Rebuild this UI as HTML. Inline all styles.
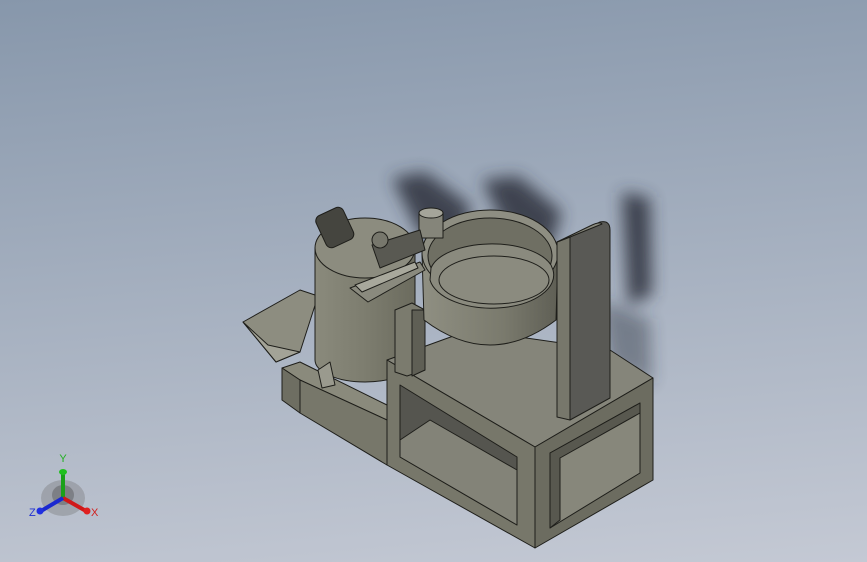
<!DOCTYPE html>
<html><head><meta charset="utf-8"><style>
html,body{margin:0;padding:0;width:867px;height:562px;overflow:hidden}
body{background:linear-gradient(175deg,#8797ab 0%,#a3aebe 45%,#c4c9d4 100%)}
svg{position:absolute;left:0;top:0}
</style></head><body>
<svg width="867" height="562" viewBox="0 0 867 562" xmlns="http://www.w3.org/2000/svg">
<defs>
<filter id="b" x="-50%" y="-50%" width="200%" height="200%"><feGaussianBlur stdDeviation="8"/></filter>
<linearGradient id="cyl" x1="0" x2="1"><stop offset="0" stop-color="#8a8a7c"/><stop offset=".5" stop-color="#7d7d6f"/><stop offset="1" stop-color="#6b6b5e"/></linearGradient>
<linearGradient id="bowl" x1="0" x2="1"><stop offset="0" stop-color="#8f8f82"/><stop offset=".6" stop-color="#7a7a6d"/><stop offset="1" stop-color="#5f5f55"/></linearGradient>
</defs>
<g fill="#2e333c" opacity=".85" filter="url(#b)">
<path d="M392 178 L425 172 L470 205 L465 250 L420 235 Z"/>
<path d="M482 180 L518 176 L562 212 L550 250 L505 228 Z"/>
<path d="M622 192 L650 198 L652 295 L628 305 Z"/>
<path d="M600 300 L650 320 L652 385 L610 365 Z" opacity=".5"/>
</g>
<g stroke="#1e1e1a" stroke-width="1" stroke-linejoin="round">
<polygon points="243,322 300,290 318,296 300,352 276,362" fill="#8d8d80"/>
<polygon points="243,322 276,362 300,352 268,345" fill="#a3a397"/>
<polygon points="282,368 300,362 387,405 387,420 300,380" fill="#8a8a7c"/>
<polygon points="282,368 300,380 300,413 282,400" fill="#6e6e62"/>
<polygon points="300,380 387,420 387,465 300,413" fill="#77776a"/>
<path d="M315 248 L315 360 A50 22 0 0 0 415 360 L415 248 Z" fill="url(#cyl)"/>
<ellipse cx="365" cy="248" rx="50" ry="30" fill="#8c8c7f"/>
<polygon points="387,360 470,330 610,350 653,378 535,447" fill="#85857a"/>
<polygon points="387,360 535,447 535,548 387,465" fill="#77776a"/>
<polygon points="400,385 517,457 517,525 400,457" fill="#55554f"/>
<polygon points="400,440 430,420 517,470 517,525 400,457" fill="#838378"/>
<polygon points="535,447 653,378 653,480 535,548" fill="#6c6c60"/>
<polygon points="550,453 640,403 640,473 550,528" fill="#87877b"/>
<polygon points="550,453 640,403 640,413 560,458 560,520 550,528" fill="#58584f"/>
<polygon points="395,310 412,303 425,310 425,370 407,376 395,372" fill="#7b7b6e"/>
<polygon points="412,310 425,310 425,370 412,376" fill="#5f5f55"/>
<path d="M422 253 L424 320 Q490 370 556 320 L558 253 Z" fill="url(#bowl)"/>
<ellipse cx="490" cy="253" rx="68" ry="43" fill="#8e8e82"/>
<ellipse cx="490" cy="256" rx="62" ry="38" fill="#6f6f63"/>
<path d="M431 268 A62 30 0 0 1 551 265 L553 270 A60 32 0 0 1 430 280 Z" fill="#8a8a7e"/>
<ellipse cx="494" cy="280" rx="55" ry="24" fill="#8b8b7f"/>
<rect x="419" y="213" width="24" height="25" fill="#85857a"/>
<ellipse cx="431" cy="213" rx="12" ry="5" fill="#a5a59a"/>
<polygon points="350,288 420,262 425,270 368,302" fill="#8a8a7e"/>
<polygon points="355,285 415,262 418,268 362,292" fill="#a8a89c"/>
<polygon points="372,245 420,230 425,250 380,268" fill="#595952"/>
<rect x="320" y="210" width="30" height="35" rx="6" fill="#45453f" transform="rotate(-25 335 228)"/>
<circle cx="380" cy="240" r="8" fill="#77776c"/>
<polygon points="557,242 570,237 570,420 557,417" fill="#77776b"/>
<path d="M570 237 L600 222 Q610 220 610 230 L610 398 L570 420 Z" fill="#595955"/>
<path d="M557 242 L590 226 Q600 221 602 224 L570 237 Z" fill="#8a8a7e"/>
<polygon points="318,370 330,362 335,385 322,388" fill="#9a9a8e"/>
</g>
<g>
<ellipse cx="63" cy="498" rx="22" ry="18" fill="#707070" opacity=".35"/>
<ellipse cx="63" cy="495" rx="11" ry="10" fill="#404040" opacity=".35"/>
<line x1="63" y1="498" x2="63" y2="472" stroke="#1aa01a" stroke-width="4"/>
<ellipse cx="63" cy="472" rx="4" ry="3" fill="#20c020"/>
<line x1="63" y1="498" x2="86" y2="511" stroke="#d01818" stroke-width="4"/>
<circle cx="87" cy="511" r="3.5" fill="#e02020"/>
<line x1="63" y1="498" x2="41" y2="511" stroke="#1a28d0" stroke-width="4"/>
<circle cx="40" cy="511" r="3.5" fill="#2030e0"/>
<text x="63" y="462" font-family="Liberation Sans, sans-serif" font-size="11" fill="#20b020" text-anchor="middle">Y</text>
<text x="91" y="516" font-family="Liberation Sans, sans-serif" font-size="11" fill="#d02020">X</text>
<text x="29" y="516" font-family="Liberation Sans, sans-serif" font-size="11" fill="#2030d0">Z</text>
</g>
</svg>
</body></html>
